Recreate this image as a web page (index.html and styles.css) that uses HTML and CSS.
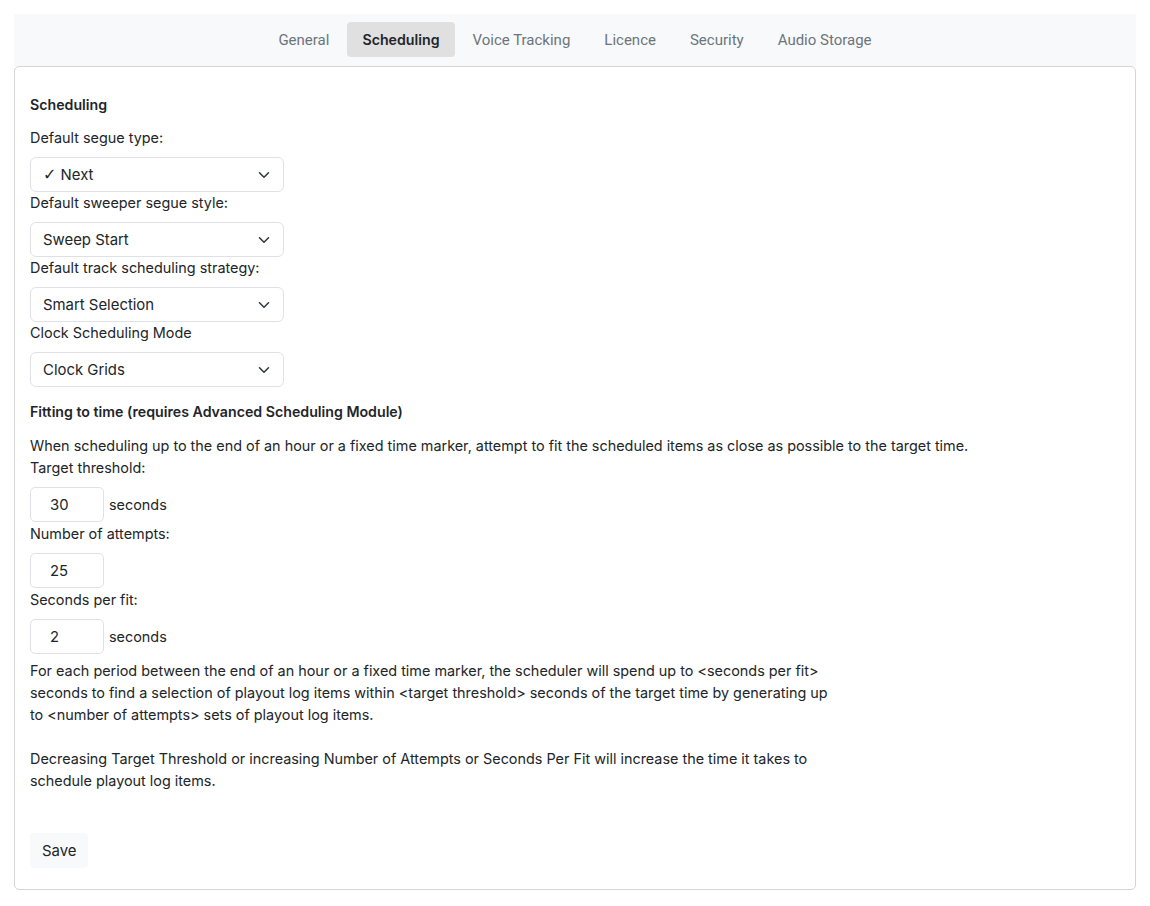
FILE: index.html
```html
<!DOCTYPE html>
<html lang="en">
  <head>
    <meta charset="UTF-8" />
    <title>Settings</title>
    <link rel="stylesheet" href="styles.css">
  </head>
  <body>
    <div class="page">
      <!-- tabs -->
      <div class="tabs">
        <a class="tab">General</a>
        <a class="tab active">Scheduling</a>
        <a class="tab">Voice Tracking</a>
        <a class="tab">Licence</a>
        <a class="tab">Security</a>
        <a class="tab">Audio Storage</a>
      </div>

      <!-- scheduling panel -->
      <div class="panel">
        <h4 class="heading first">Scheduling</h4>

        <label class="lbl">Default segue type:</label>
        <div class="select">
          <span><span class="tick">✓</span> Next</span>
          <svg class="chev" width="12" height="8" viewBox="0 0 12 8"><path d="M1.5 1.8 L6 6.2 L10.5 1.8" fill="none" stroke="#343a40" stroke-width="1.6" stroke-linecap="round" stroke-linejoin="round"/></svg>
        </div>

        <label class="lbl">Default sweeper segue style:</label>
        <div class="select">
          <span>Sweep Start</span>
          <svg class="chev" width="12" height="8" viewBox="0 0 12 8"><path d="M1.5 1.8 L6 6.2 L10.5 1.8" fill="none" stroke="#343a40" stroke-width="1.6" stroke-linecap="round" stroke-linejoin="round"/></svg>
        </div>

        <label class="lbl">Default track scheduling strategy:</label>
        <div class="select">
          <span>Smart Selection</span>
          <svg class="chev" width="12" height="8" viewBox="0 0 12 8"><path d="M1.5 1.8 L6 6.2 L10.5 1.8" fill="none" stroke="#343a40" stroke-width="1.6" stroke-linecap="round" stroke-linejoin="round"/></svg>
        </div>

        <label class="lbl">Clock Scheduling Mode</label>
        <div class="select">
          <span>Clock Grids</span>
          <svg class="chev" width="12" height="8" viewBox="0 0 12 8"><path d="M1.5 1.8 L6 6.2 L10.5 1.8" fill="none" stroke="#343a40" stroke-width="1.6" stroke-linecap="round" stroke-linejoin="round"/></svg>
        </div>

        <h4 class="heading">Fitting to time (requires Advanced Scheduling Module)</h4>
        <p class="txt">When scheduling up to the end of an hour or a fixed time marker, attempt to fit the scheduled items as close as possible to the target time.</p>

        <label class="lbl">Target threshold:</label>
        <div class="num-row">
          <div class="num">30</div>
          <span>seconds</span>
        </div>

        <label class="lbl">Number of attempts:</label>
        <div class="num-row">
          <div class="num">25</div>
        </div>

        <label class="lbl">Seconds per fit:</label>
        <div class="num-row">
          <div class="num">2</div>
          <span>seconds</span>
        </div>

        <p class="note">For each period between the end of an hour or a fixed time marker, the scheduler will spend up to &lt;seconds per fit&gt; seconds to find a selection of playout log items within &lt;target threshold&gt; seconds of the target time by generating up to &lt;number of attempts&gt; sets of playout log items.</p>
        <p class="note">Decreasing Target Threshold or increasing Number of Attempts or Seconds Per Fit will increase the time it takes to schedule playout log items.</p>

        <button class="btn-save">Save</button>
      </div>
    </div>
  </body>
</html>
```

FILE: styles.css
```css
* {
    margin: 0;
    padding: 0;
    box-sizing: border-box;
}

body {
    background: #fff;
    font-family: Inter, "Noto Sans", sans-serif;
    font-size: 14.4px;
    line-height: 22px;
    color: #212529;
}

.page {
    padding: 14px;
}

.tabs {
    display: flex;
    justify-content: center;
    gap: 2px;
    background-color: #f8f9fa;
    padding: 8px 0 9px;
}

.tab {
    font-family: Roboto, "Liberation Sans", sans-serif;
    font-size: 15px;
    color: #6c757d;
    padding: 6px 16px 6px;
    border-radius: 4px;
    line-height: 23px;
    position: relative;
    top: 1px;
}

.tab.active {
    top: 0;
    background-color: #e0e0e0;
    color: #212529;
    font-family: Inter, sans-serif;
    font-weight: 600;
    font-size: 14.2px;
    padding: 6px 15px;
}

.panel {
    border: 1px solid #d5d5d5;
    border-radius: 5px;
    padding: 15px 15px 21px;
}

.heading {
    font-size: 14.2px;
    font-weight: 600;
    margin-top: 14px;
    margin-bottom: 12px;
}

.heading.first {
    margin-top: 12px;
    margin-bottom: 11px;
}

.lbl {
    display: block;
    margin-bottom: 8px;
}

.select {
    width: 254px;
    height: 35px;
    border: 1px solid #dee2e6;
    border-radius: 6px;
    display: flex;
    align-items: center;
    justify-content: space-between;
    padding: 0 13px 0 12px;
    font-size: 14.9px;
}

.tick {
    font-family: "DejaVu Sans", sans-serif;
    font-size: 16px;
}

.chev {
    display: block;
}

.num-row {
    display: flex;
    align-items: center;
    gap: 5px;
    margin-bottom: 1px;
}

.num {
    width: 74px;
    height: 35px;
    border: 1px solid #dee2e6;
    border-radius: 5px;
    padding-left: 19px;
    display: flex;
    align-items: center;
    font-size: 14.8px;
}

.note {
    max-width: 805px;
    margin-top: 6px;
}

.note + .note {
    margin-top: 22px;
}

.btn-save {
    margin-top: 41px;
    background-color: #f8f9fa;
    border: none;
    border-radius: 4px;
    font-family: Inter, sans-serif;
    font-size: 14.9px;
    color: #212529;
    padding: 0 12px;
    height: 35px;
}
```
